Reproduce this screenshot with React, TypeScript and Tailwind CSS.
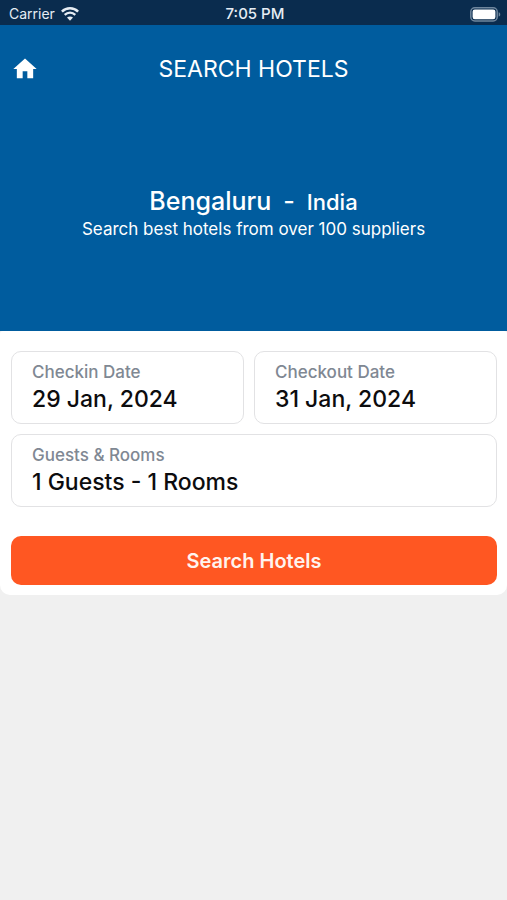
import React from 'react';

interface SearchFieldProps {
  label: string;
  value: string;
}

const SearchField: React.FC<SearchFieldProps> = ({ label, value }) => (
  <button
    type="button"
    className="flex h-[73px] w-full flex-col rounded-[10px] border border-[#e2e2e4] bg-white px-5 pt-[7px] text-left font-medium"
  >
    <span className="text-[17px] leading-[26px] text-[#808893]">{label}</span>
    <span className="text-[23px] leading-[28px] text-[#0c0c0e]">{value}</span>
  </button>
);

const WifiIcon: React.FC = () => (
  <svg viewBox="0 0 18 14" className="h-[14px] w-[18px]" fill="none" stroke="currentColor" aria-hidden="true">
    <path d="M.9 4.7C5.4.2 12.6.2 17.1 4.7" strokeWidth="2.5" />
    <path d="M3.7 7.9C6.8 4.9 11.2 4.9 14.3 7.9" strokeWidth="2.3" />
    <path d="M9 13.8 6 10.6C7.7 9 10.3 9 12 10.6Z" fill="currentColor" stroke="none" />
  </svg>
);

const BatteryIcon: React.FC = () => (
  <svg viewBox="0 0 31 15" className="h-[15px] w-[31px]" aria-hidden="true">
    <rect x="0.8" y="0.8" width="26.4" height="13.2" rx="4" fill="none" stroke="#6f869d" strokeWidth="1.5" />
    <rect x="2.6" y="2.5" width="22.8" height="9.8" rx="2.2" fill="#ffffff" />
    <path d="M28.7 5.2C30.8 5.9 30.8 8.9 28.7 9.6Z" fill="#6f869d" />
  </svg>
);

const StatusBar: React.FC = () => (
  <div className="grid h-[25px] grid-cols-3 items-end bg-[#0a2c4e] pl-[9px] pr-[6px] text-[#e6edf4]">
    <div className="flex items-center gap-[6px]">
      <span className="text-[14px] leading-[22px]">Carrier</span>
      <WifiIcon />
    </div>
    <span className="text-center text-[15px] font-medium leading-[22px]">7:05 PM</span>
    <div className="flex h-[22px] items-center justify-end">
      <BatteryIcon />
    </div>
  </div>
);

const App: React.FC = () => (
  <div className="min-h-screen bg-[#f0f0f0] font-['Inter','Liberation_Sans',sans-serif]">
    <header className="bg-[#005c9e] text-white">
      <StatusBar />
      <div className="grid h-[88px] grid-cols-[28px_1fr_28px] items-center px-[11px]">
        <button type="button" aria-label="Home" className="size-7">
          <svg viewBox="0 0 24 24" className="size-7" fill="currentColor" aria-hidden="true">
            <path d="M10 20v-6h4v6h5v-8h3L12 3 2 12h3v8z" />
          </svg>
        </button>
        <h1 className="text-center text-[23px] leading-7">SEARCH HOTELS</h1>
      </div>
      <div className="h-[218px] pt-[74px] text-center">
        <button type="button" className="flex w-full items-baseline justify-center font-medium leading-7">
          <span className="text-[25px]">Bengaluru</span>
          <span className="px-3 text-[25px]">-</span>
          <span className="text-[22px]">India</span>
        </button>
        <p className="text-[17px] leading-[26px]">Search best hotels from over 100 suppliers</p>
      </div>
    </header>

    <main className="rounded-t-[3px] rounded-b-[10px] bg-white pt-5 pr-[10px] pb-[10px] pl-[11px]">
      <div className="flex">
        <div className="w-1/2 pr-[10px]">
          <SearchField label="Checkin Date" value="29 Jan, 2024" />
        </div>
        <div className="w-1/2">
          <SearchField label="Checkout Date" value="31 Jan, 2024" />
        </div>
      </div>
      <div className="mt-[10px]">
        <SearchField label="Guests & Rooms" value="1 Guests - 1 Rooms" />
      </div>
      <button
        type="button"
        className="mt-[29px] h-[49px] w-full rounded-[10px] bg-[#ff5722] text-[20px] font-semibold leading-6 text-[#fff3ee]"
      >
        Search Hotels
      </button>
    </main>
  </div>
);

export default App;
